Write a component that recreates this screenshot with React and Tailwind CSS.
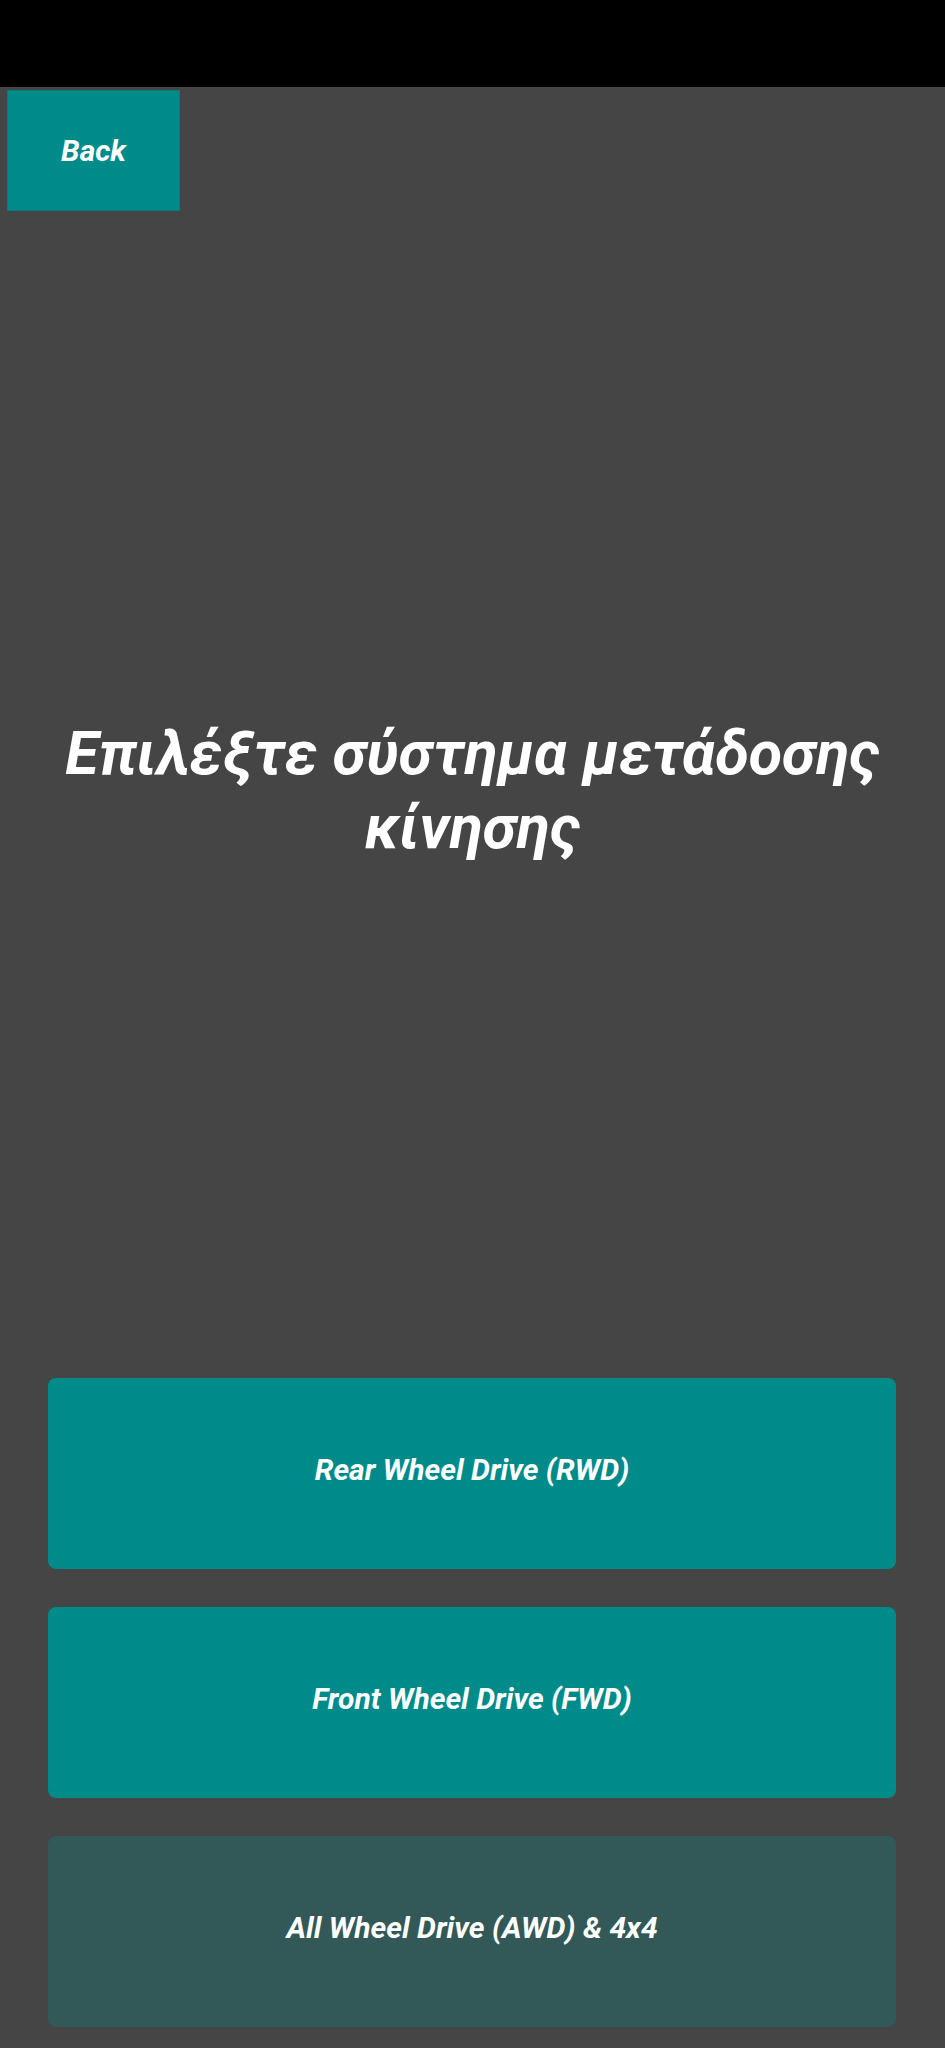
import React from "react";

const options = [
  { label: "Rear Wheel Drive (RWD)", tone: "bg-[#008b8b]" },
  { label: "Front Wheel Drive (FWD)", tone: "bg-[#008b8b]" },
  { label: "All Wheel Drive (AWD) & 4x4", tone: "bg-[#325858]" },
];

const App = () => {
  return (
    <div
      className="w-[945px] h-[2048px] flex flex-col bg-[#454545] text-white italic font-bold"
      style={{ fontFamily: "Roboto, 'Noto Sans', sans-serif" }}
    >
      {/* Status bar */}
      <div className="h-[87px] bg-black shrink-0" />

      {/* Back button */}
      <div className="pl-[7px] pt-[3px]">
        <button className="w-[173px] h-[121px] bg-[#008b8b] border border-[#0a7a7a] text-[30px] flex items-center justify-center">
          Back
        </button>
      </div>

      {/* Title */}
      <h1 className="mt-[505px] px-[30px] text-center text-[61px] leading-[74px]">
        Επιλέξτε σύστημα μετάδοσης κίνησης
      </h1>

      {/* Options */}
      <div className="mt-auto mb-[21px] pl-[48px] pr-[49px] flex flex-col gap-[38px]">
        {options.map((o) => (
          <button
            key={o.label}
            className={`h-[191px] pb-[8px] rounded-[8px] ${o.tone} text-[30px] flex items-center justify-center`}
          >
            {o.label}
          </button>
        ))}
      </div>
    </div>
  );
};

export default App;
